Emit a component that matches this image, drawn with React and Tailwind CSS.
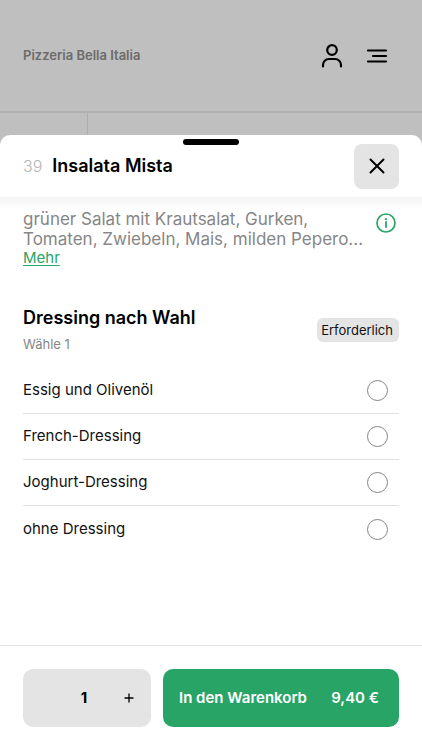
import React, { useState } from 'react';

const DRESSINGS = ['Essig und Olivenöl', 'French-Dressing', 'Joghurt-Dressing', 'ohne Dressing'];
const PRICE = 9.4;

const UserIcon = () => (
  <svg width="24" height="26" viewBox="0 0 24 26" fill="none" stroke="currentColor" strokeWidth="2.2" strokeLinecap="round" aria-hidden="true">
    <circle cx="12" cy="7" r="4.800" />
    <path d="M3 23.500v-1.500a6 6 0 0 1 6-6h6a6 6 0 0 1 6 6v1.500" />
  </svg>
);

const MenuIcon = () => (
  <svg width="22" height="16" viewBox="0 0 22 16" fill="none" stroke="currentColor" strokeWidth="2.2" strokeLinecap="round" aria-hidden="true">
    <path d="M2 2.500h18M7 8h13M2 13.500h18" />
  </svg>
);

const CloseIcon = () => (
  <svg width="18" height="18" viewBox="0 0 18 18" fill="none" stroke="currentColor" strokeWidth="2" strokeLinecap="round" aria-hidden="true">
    <path d="M2.500 2.500l13 13M15.500 2.500l-13 13" />
  </svg>
);

const InfoIcon = () => (
  <svg width="20" height="20" viewBox="0 0 20 20" fill="none" stroke="currentColor" aria-hidden="true">
    <circle cx="10" cy="10" r="9" strokeWidth="1.700" />
    <path d="M10 9v5" strokeWidth="1.800" strokeLinecap="round" />
    <circle cx="10" cy="6.200" r="1.100" fill="currentColor" stroke="none" />
  </svg>
);

const PlusIcon = () => (
  <svg width="10" height="10" viewBox="0 0 10 10" fill="none" stroke="currentColor" strokeWidth="1.300" strokeLinecap="round" aria-hidden="true">
    <path d="M5 1v8M1 5h8" />
  </svg>
);

const App = () => {
  const [dressing, setDressing] = useState('');
  const [amount, setAmount] = useState(1);

  const total = (PRICE * amount).toFixed(2).replace('.', ',');

  return (
    <div className="flex min-h-screen flex-col bg-[#bfbfbf] font-['Inter','Liberation_Sans',sans-serif] text-black">
      <header className="flex h-[113px] items-center justify-between border-b-2 border-[#b0b0b0] px-[23px]">
        <span className="text-[13px] font-semibold text-[#6c6c6c]">Pizzeria Bella Italia</span>
        <div className="flex items-center gap-[22px] pr-[11px]">
          <button type="button" aria-label="Konto">
            <UserIcon />
          </button>
          <button type="button" aria-label="Menü">
            <MenuIcon />
          </button>
        </div>
      </header>
      <div className="h-[22px] w-22 border-r border-[#aeaeae]"></div>

      <section role="dialog" aria-labelledby="dish" className="flex flex-1 flex-col rounded-t-[10px] bg-white">
        <div className="relative flex h-[62px] items-center justify-between px-[23px]">
          <div className="absolute top-1 left-1/2 h-1.5 w-14 -translate-x-1/2 rounded-full bg-black"></div>
          <h1 id="dish" className="flex items-center gap-2.5 text-lg font-semibold">
            <span className="text-base font-light text-[#b5b5b5]">39</span>
            Insalata Mista
          </h1>
          <button type="button" aria-label="Schließen" className="flex size-[45px] items-center justify-center rounded-lg bg-[#e4e4e4]">
            <CloseIcon />
          </button>
        </div>

        <main className="flex-1 bg-linear-to-b from-[#f3f3f3] to-white to-[12px] px-[23px] pt-3 pb-6">
          <div className="flex items-start justify-between">
            <div className="min-w-0">
              <p className="text-[17px] leading-5 text-[#868686]">
                grüner Salat mit Krautsalat, Gurken, Tomaten, Zwiebeln, Mais, milden Pepero...
              </p>
              <a href="#mehr" className="block text-[15px] leading-[18px] text-[#28a566] underline underline-offset-2">Mehr</a>
            </div>
            <button type="button" aria-label="Informationen" className="mt-1 mr-[3px] shrink-0 text-[#28a566]">
              <InfoIcon />
            </button>
          </div>

          <div role="radiogroup" aria-labelledby="dressing-title" className="mt-[37px]">
            <div className="flex items-center justify-between pb-3">
              <div>
                <h2 id="dressing-title" className="text-lg leading-7 font-semibold">Dressing nach Wahl</h2>
                <p className="text-[13px] leading-6 text-[#868686]">Wähle 1</p>
              </div>
              <span className="rounded-md bg-[#e4e4e4] pr-1.5 pl-1 text-[13px] leading-6 text-[#111]">Erforderlich</span>
            </div>

            <div className="divide-y divide-[#e0e0e0]">
              {DRESSINGS.map((name) => (
                <label key={name} className="flex h-[46px] items-center justify-between pr-[11px] text-[15px] text-[#111]">
                  {name}
                  <input
                    type="radio"
                    name="dressing"
                    value={name}
                    checked={dressing === name}
                    onChange={() => setDressing(name)}
                    className="size-[21px] appearance-none rounded-full border border-[#858585] checked:border-[6px] checked:border-[#28a566]"
                  />
                </label>
              ))}
            </div>
          </div>
        </main>

        <footer className="flex gap-3 border-t border-[#e4e4e4] px-[23px] py-[23px]">
          <div className="flex h-[58px] w-32 shrink-0 items-center rounded-[10px] bg-[#e4e4e4] text-center">
            <button
              type="button"
              aria-label="Weniger"
              className="h-full flex-1"
              onClick={() => setAmount(Math.max(1, amount - 1))}
            >
              {amount > 1 && '−'}
            </button>
            <span className="w-8 text-[15px] font-bold">{amount}</span>
            <button
              type="button"
              aria-label="Mehr"
              className="flex h-full flex-1 items-center justify-center pl-1.5"
              onClick={() => setAmount(amount + 1)}
            >
              <PlusIcon />
            </button>
          </div>
          <button type="button" className="flex flex-1 items-center justify-between rounded-[10px] bg-[#28a566] pr-5 pl-4 text-[15px] font-semibold text-white">
            <span>In den Warenkorb</span>
            <span>{total} €</span>
          </button>
        </footer>
      </section>
    </div>
  );
};

export default App;
